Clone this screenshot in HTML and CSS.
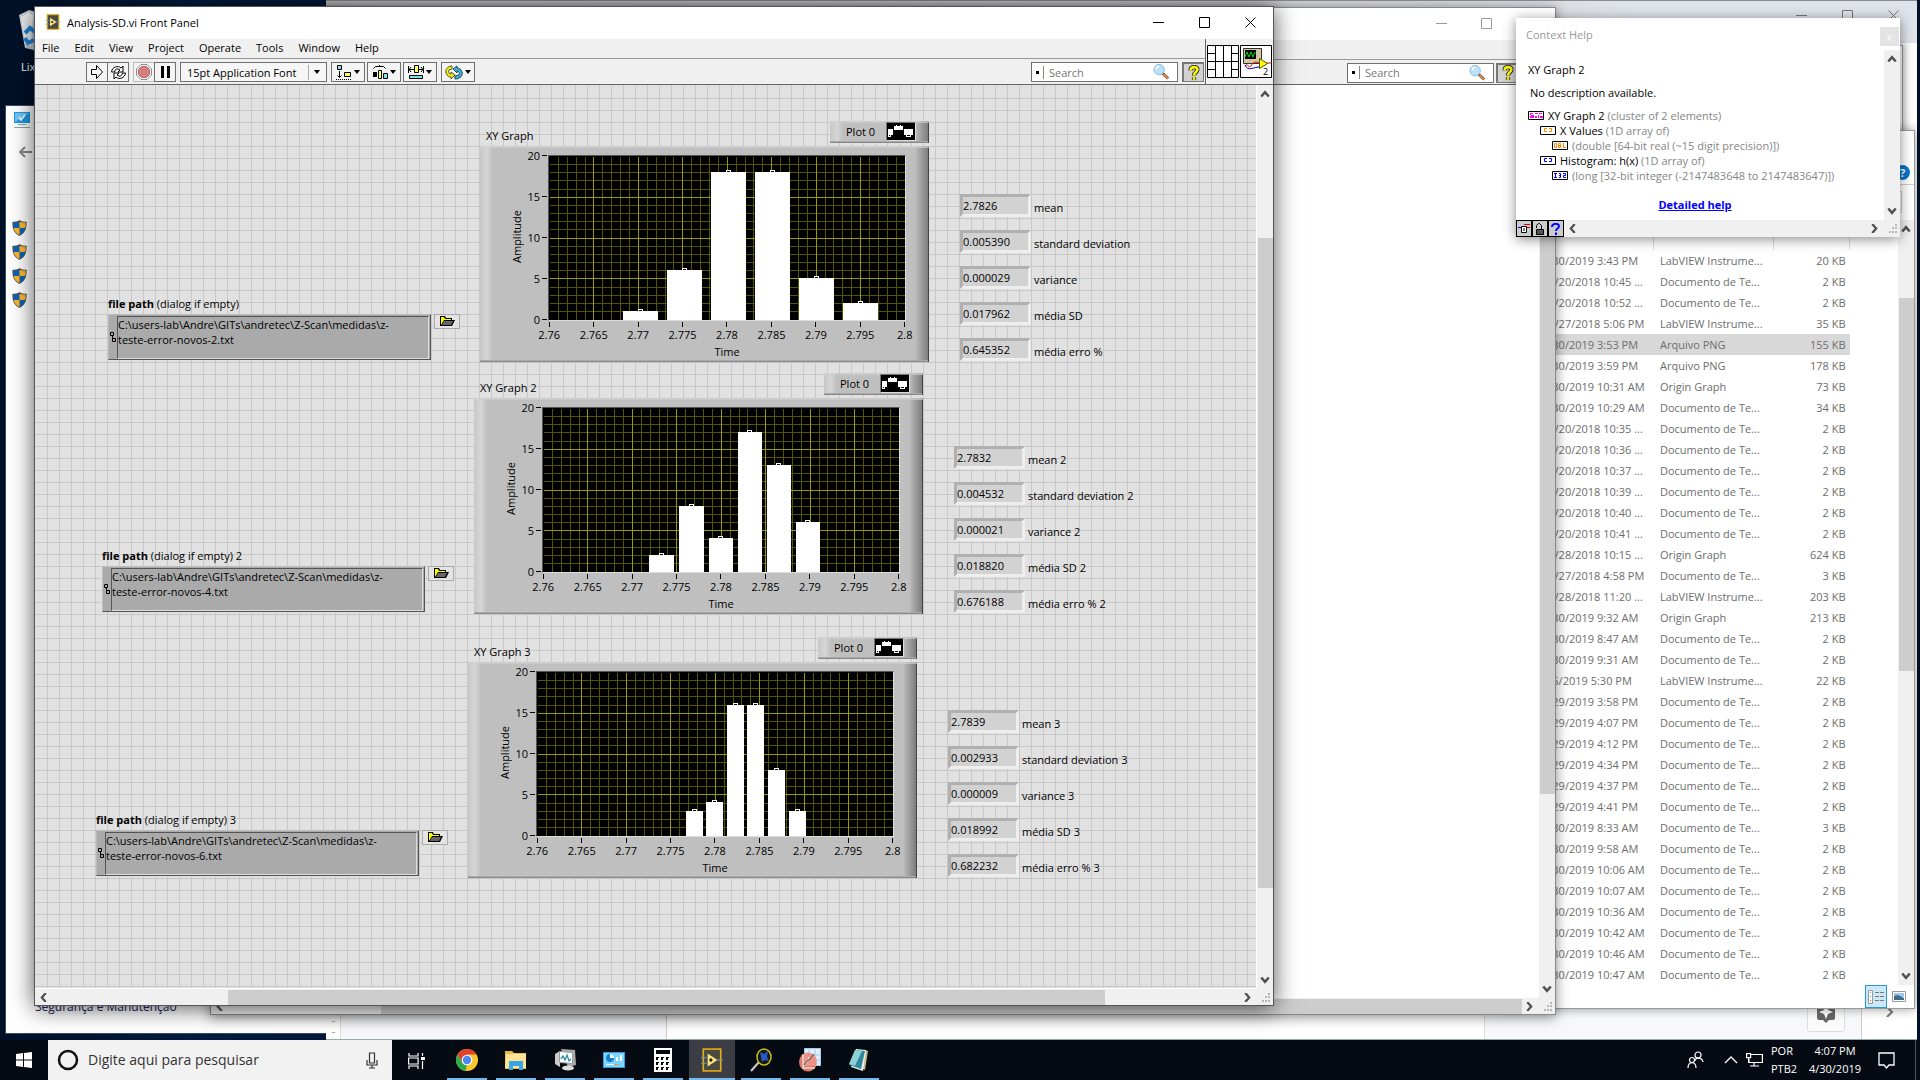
FILE: index.html
```html
<!DOCTYPE html>
<html lang="pt-BR">
<head>
<meta charset="utf-8">
<title>Analysis-SD.vi Front Panel</title>
<link rel="stylesheet" href="styles.css">
</head>
<body>
<svg class="defs" aria-hidden="true">
  <symbol id="plot-grid" viewBox="0 0 356 164">
    <rect width="356" height="164" fill="#000"/>
    <g transform="translate(.5 .5)" fill="none" shape-rendering="crispEdges">
      <path stroke="#555500" d="M9 0v164M18 0v164M27 0v164M36 0v164M53 0v164M62 0v164M71 0v164M80 0v164M98 0v164M107 0v164M116 0v164M124 0v164M142 0v164M151 0v164M160 0v164M169 0v164M187 0v164M196 0v164M204 0v164M213 0v164M231 0v164M240 0v164M249 0v164M258 0v164M276 0v164M284 0v164M293 0v164M302 0v164M320 0v164M329 0v164M338 0v164M347 0v164M0 8h356M0 16h356M0 24h356M0 33h356M0 49h356M0 57h356M0 65h356M0 73h356M0 90h356M0 98h356M0 106h356M0 114h356M0 131h356M0 139h356M0 147h356M0 155h356"/>
      <path stroke="#999900" d="M44 0v164M89 0v164M133 0v164M178 0v164M222 0v164M267 0v164M311 0v164M0 41h356M0 82h356M0 122h356"/>
    </g>
  </symbol>
  <symbol id="marker" viewBox="0 0 5 2"><path fill="#fff" d="M0 0h5v2h-5z"/><path d="M1 1h3v1h-3z"/></symbol>
  <symbol id="legend" viewBox="0 0 28 17">
    <rect width="28" height="17"/><path fill="#fff" d="M1 6h5v6h-2v2h-3zM7 3h2v-1h1v1h3v-1h1v1h2v4h-9zM17 6h9v6h-2v2h-5v-2h-2z"/><path d="M2 12h1v1h-1zM20 12h3v1h-3z"/>
  </symbol>
  <symbol id="folder-open" viewBox="0 0 15 11">
    <path d="M0 0h5l1 2h6v2h3l-3 6h-12z"/><path fill="#ff0" d="M1 1h3l1 2h6v1h-7l-3 5z"/><path fill="#666" d="M4 5h9l-2 4h-9z"/>
  </symbol>
  <symbol id="path-mark" viewBox="0 0 6 11"><path fill="none" stroke="#000" d="M.5.5h3v3h-3zM2.5 4v3M2.500 6.500h3v3h-3z"/></symbol>
  <symbol id="magnifier" viewBox="0 0 18 18">
    <path stroke="#555" stroke-width="3" d="M10 10l6 6"/><path stroke="#e8873a" stroke-width="2" d="M11 11l5 5"/><circle cx="6.500" cy="6.500" r="5.500" fill="#b9e2fa" stroke="#8eb2d8"/><path stroke="#fff" stroke-width="1.500" fill="none" d="M3.500 6a3 3 0 0 1 3-3"/>
  </symbol>
  <symbol id="help-mark" viewBox="0 0 14 18">
    <path fill="none" stroke="#222" stroke-width="5" d="M3 6c0-5 8-5 8-1 0 3-4 3-4 7M7 14v3"/><path fill="none" stroke="#ff0" stroke-width="3" d="M3 6c0-5 8-5 8-1 0 3-4 3-4 7M7 14v3"/>
  </symbol>
  <symbol id="shield" viewBox="0 0 16 18">
    <path fill="#555" d="M8 0c2 2 5 2 8 2 0 8-1 12-8 16-7-4-8-8-8-16 3 0 6 0 8-2z"/><path fill="#0b63ba" d="M8 2v7h-6.500c-.4-2-.4-4-.3-6 3 0 5 0 6.800-1zM8 9h6.500c-1 4-3 6-6.500 8z"/><path fill="#fcb92c" d="M8 2c2 1 4 1 6.800 1 .1 2 .1 4-.3 6h-6.500zM8 9v8c-3.500-2-5.500-4-6.500-8z"/>
  </symbol>
  <symbol id="up" viewBox="0 0 8 6"><path fill="none" stroke="#505050" stroke-width="2" d="M1 5l3-3.500 3 3.500"/></symbol>
  <symbol id="down" viewBox="0 0 8 6"><path fill="none" stroke="#505050" stroke-width="2" d="M1 1l3 3.500 3-3.500"/></symbol>
  <symbol id="left" viewBox="0 0 6 8"><path fill="none" stroke="#505050" stroke-width="2" d="M5 0l-3.500 4 3.500 4"/></symbol>
  <symbol id="right" viewBox="0 0 6 8"><path fill="none" stroke="#505050" stroke-width="2" d="M1 0l3.500 4-3.500 4"/></symbol>
  <symbol id="grip" viewBox="0 0 10 10"><path fill="#b8b8b8" d="M7 0h2v2h-2zM4 3h2v2h-2zM7 3h2v2h-2zM1 7h2v2h-2zM4 7h2v2h-2zM7 7h2v2h-2z"/></symbol>
  <symbol id="min" viewBox="0 0 11 11"><path stroke="currentColor" d="M0 5.500h11"/></symbol>
  <symbol id="max" viewBox="0 0 11 11"><path fill="none" stroke="currentColor" d="M.5.5h10v10h-10z"/></symbol>
  <symbol id="close" viewBox="0 0 11 11"><path stroke="currentColor" d="M.5.5l10 10M10.500.5l-10 10"/></symbol>
  <symbol id="labview" viewBox="0 0 20 22">
    <rect x="2" y="1" width="16" height="20" fill="#4a4a42" stroke="#e3ab14" stroke-width="1.500"/><path stroke="#5aa7d8" d="M0 9h5M0 14h5M15 11h5"/><path fill="#ffe27a" d="M6 5l9 6-9 6z"/><circle cx="9" cy="11" r="1.500" fill="#222"/>
  </symbol>
</svg>

<main class="desktop">
  <div class="bin">
    <svg width="24" height="42" viewBox="0 0 24 42"><path fill="#c9ced3" d="M0 5l10-5 14 4v38l-18-4z"/><path fill="#eef1f3" d="M2 7l8-5 4 4-2 30-6-2z"/><path fill="none" stroke="#1a86e0" stroke-width="4" d="M6 23l5-5 5 4M15 30l-6 3-3-5"/></svg>
    <span>Lixeira</span>
  </div>

  <section class="win control-panel" aria-label="Painel de Controle">
    <svg class="cp-icon" width="16" height="16" viewBox="0 0 16 16"><path fill="#1e9be8" d="M0 0h16v11H0z"/><path fill="#70c8f8" d="M1 1h14L1 10z"/><path fill="none" stroke="#fff" stroke-width="1.500" d="M5 5l2 3 4-5"/><path stroke="#8aa" d="M4 12.500h8M0 15.500h16"/></svg>
    <button class="plain back" aria-label="Voltar"><svg width="14" height="12" viewBox="0 0 14 12"><path fill="none" stroke="#888" stroke-width="2" d="M14 6H2M7 1L2 6l5 5"/></svg></button>
    <div class="shields">
      <svg><use href="#shield"/></svg><svg><use href="#shield"/></svg><svg><use href="#shield"/></svg><svg><use href="#shield"/></svg>
    </div>
    <a class="cp-link" href="#seguranca">Segurança e Manutenção</a>
  </section>

  <section class="win browser" aria-label="Navegador">
    <header class="browser-top"><svg><use href="#min"/></svg><svg><use href="#max"/></svg><svg><use href="#close"/></svg></header>
    <div class="browser-body">
      <div class="ruler"><i></i><i></i></div><div class="side"></div><div class="doc"></div>
      <div class="side right-side"><button class="explore" aria-label="Explorar"><svg width="18" height="22" viewBox="0 0 18 22"><path fill="#666" d="M2 0h14q2 0 2 2v14q0 2-2 2h-4l-3 3-3-3H2q-2 0-2-2V2q0-2 2-2z"/><path fill="#fff" d="M9 3l2 5 5 2-5 2-2 5-2-5-5-2 5-2z"/></svg></button></div>
      <div class="browser-tail"><svg width="8" height="10" viewBox="0 0 8 10"><path fill="none" stroke="#777" stroke-width="2" d="M1 0l5 5-5 5"/></svg></div>
    </div>
  </section>

  <section class="win behind" aria-hidden="true"></section>

  <section class="win explorer" aria-label="Explorador de Arquivos">
    <div class="ribbon"><span class="round-help">?</span></div>
    <div class="address"><div></div></div>
    <div class="ex-body">
      <table class="files">
        <thead><tr><th>Data de modificação</th><th>Tipo</th><th>Tamanho</th></tr></thead>
        <tbody>
          <tr><td>4/30/2019 3:43 PM</td><td>LabVIEW Instrume...</td><td>20 KB</td></tr>
          <tr><td>12/20/2018 10:45 ...</td><td>Documento de Te...</td><td>2 KB</td></tr>
          <tr><td>12/20/2018 10:52 ...</td><td>Documento de Te...</td><td>2 KB</td></tr>
          <tr><td>11/27/2018 5:06 PM</td><td>LabVIEW Instrume...</td><td>35 KB</td></tr>
          <tr class="selected"><td>4/30/2019 3:53 PM</td><td>Arquivo PNG</td><td>155 KB</td></tr>
          <tr><td>4/30/2019 3:59 PM</td><td>Arquivo PNG</td><td>178 KB</td></tr>
          <tr><td>4/30/2019 10:31 AM</td><td>Origin Graph</td><td>73 KB</td></tr>
          <tr><td>4/30/2019 10:29 AM</td><td>Documento de Te...</td><td>34 KB</td></tr>
          <tr><td>12/20/2018 10:35 ...</td><td>Documento de Te...</td><td>2 KB</td></tr>
          <tr><td>12/20/2018 10:36 ...</td><td>Documento de Te...</td><td>2 KB</td></tr>
          <tr><td>12/20/2018 10:37 ...</td><td>Documento de Te...</td><td>2 KB</td></tr>
          <tr><td>12/20/2018 10:39 ...</td><td>Documento de Te...</td><td>2 KB</td></tr>
          <tr><td>12/20/2018 10:40 ...</td><td>Documento de Te...</td><td>2 KB</td></tr>
          <tr><td>12/20/2018 10:41 ...</td><td>Documento de Te...</td><td>2 KB</td></tr>
          <tr><td>11/28/2018 10:15 ...</td><td>Origin Graph</td><td>624 KB</td></tr>
          <tr><td>11/27/2018 4:58 PM</td><td>Documento de Te...</td><td>3 KB</td></tr>
          <tr><td>11/28/2018 11:20 ...</td><td>LabVIEW Instrume...</td><td>203 KB</td></tr>
          <tr><td>4/30/2019 9:32 AM</td><td>Origin Graph</td><td>213 KB</td></tr>
          <tr><td>4/30/2019 8:47 AM</td><td>Documento de Te...</td><td>2 KB</td></tr>
          <tr><td>4/30/2019 9:31 AM</td><td>Documento de Te...</td><td>2 KB</td></tr>
          <tr><td>4/5/2019 5:30 PM</td><td>LabVIEW Instrume...</td><td>22 KB</td></tr>
          <tr><td>4/29/2019 3:58 PM</td><td>Documento de Te...</td><td>2 KB</td></tr>
          <tr><td>4/29/2019 4:07 PM</td><td>Documento de Te...</td><td>2 KB</td></tr>
          <tr><td>4/29/2019 4:12 PM</td><td>Documento de Te...</td><td>2 KB</td></tr>
          <tr><td>4/29/2019 4:34 PM</td><td>Documento de Te...</td><td>2 KB</td></tr>
          <tr><td>4/29/2019 4:37 PM</td><td>Documento de Te...</td><td>2 KB</td></tr>
          <tr><td>4/29/2019 4:41 PM</td><td>Documento de Te...</td><td>2 KB</td></tr>
          <tr><td>4/30/2019 8:33 AM</td><td>Documento de Te...</td><td>3 KB</td></tr>
          <tr><td>4/30/2019 9:58 AM</td><td>Documento de Te...</td><td>2 KB</td></tr>
          <tr><td>4/30/2019 10:06 AM</td><td>Documento de Te...</td><td>2 KB</td></tr>
          <tr><td>4/30/2019 10:07 AM</td><td>Documento de Te...</td><td>2 KB</td></tr>
          <tr><td>4/30/2019 10:36 AM</td><td>Documento de Te...</td><td>2 KB</td></tr>
          <tr><td>4/30/2019 10:42 AM</td><td>Documento de Te...</td><td>2 KB</td></tr>
          <tr><td>4/30/2019 10:46 AM</td><td>Documento de Te...</td><td>2 KB</td></tr>
          <tr><td>4/30/2019 10:47 AM</td><td>Documento de Te...</td><td>2 KB</td></tr>
        </tbody>
      </table>
      <div class="vscroll"><svg class="v"><use href="#up"/></svg><div class="track"><div class="thumb" style="margin-top:65px;height:373px"></div></div><svg class="v"><use href="#down"/></svg></div>
    </div>
    <footer class="ex-foot">
      <button class="view on" aria-label="Detalhes"><svg width="16" height="14" viewBox="0 0 16 14"><path fill="#fff" stroke="#999" d="M.5.5h4v13h-4z"/><path stroke="#777" d="M7 2.500h4M12 2.500h4M7 6.500h4M12 6.500h4M7 10.500h4M12 10.500h4"/><path fill="#69b" d="M2 2h1v1h-1zM2 6h1v1h-1z"/><path fill="#d44" d="M2 10h1v1h-1z"/></svg></button>
      <button class="view" aria-label="Miniaturas"><svg width="14" height="11" viewBox="0 0 14 11"><path fill="#fff" stroke="#999" d="M.5.5h13v10H.5z"/><path fill="#9cc8f4" d="M2 2h10v4H2z"/><path fill="#3f6d8a" d="M2 5l4-1 6 3v2H2z"/></svg></button>
    </footer>
  </section>

  <section class="win lv second" aria-label="LabVIEW">
    <header class="titlebar"><span></span>
      <div class="controls"><svg><use href="#min"/></svg><svg><use href="#max"/></svg><svg><use href="#close"/></svg></div>
    </header>
    <div class="menubar"></div>
    <div class="toolbar">
      <div class="search-box"><span class="search-arrow"></span><input type="text" placeholder="Search" aria-label="Search diagram"><svg><use href="#magnifier"/></svg></div>
      <button class="help-btn" aria-label="Help"><svg><use href="#help-mark"/></svg></button>
    </div>
    <div class="client">
      <div class="canvas blank"></div>
      <div class="vscroll"><svg class="v"><use href="#up"/></svg><div class="track"><div class="thumb" style="margin-top:62px;height:634px"></div></div><svg class="v"><use href="#down"/></svg></div>
    </div>
    <div class="hrow"><div class="hscroll"><svg class="h"><use href="#left"/></svg><div class="track"><div class="thumb" style="margin-left:152px;width:1141px"></div></div><svg class="h"><use href="#right"/></svg></div><svg class="grip"><use href="#grip"/></svg></div>
  </section>

  <section class="win lv front" aria-label="Analysis-SD.vi Front Panel">
    <header class="titlebar">
      <svg class="app" width="16" height="16"><use href="#labview"/></svg><span>Analysis-SD.vi Front Panel</span>
      <div class="controls">
        <button class="plain" aria-label="Minimize"><svg><use href="#min"/></svg></button><button class="plain" aria-label="Maximize"><svg><use href="#max"/></svg></button><button class="plain" aria-label="Close"><svg><use href="#close"/></svg></button>
      </div>
    </header>
    <div class="bars">
      <div class="bars-main">
        <nav class="menubar"><a href="#file">File</a><a href="#edit">Edit</a><a href="#view">View</a><a href="#project">Project</a><a href="#operate">Operate</a><a href="#tools">Tools</a><a href="#window">Window</a><a href="#help">Help</a></nav>
        <div class="toolbar">
          <div class="pair">
            <button class="tool sq" aria-label="Run"><svg width="12" height="14" viewBox="0 0 12 14"><path fill="#fff" stroke="#000" d="M.5 4.500h5v-4l6 6.500-6 6.500v-4h-5z"/></svg></button>
            <button class="tool sq" aria-label="Run continuously"><svg width="17" height="15" viewBox="0 0 17 15"><path fill="#fff" stroke="#000" d="M1.500 7C2 2 8 0 11 3l2-2v6H8l2-2C7 3 5 4 4.500 7zM15.500 8c-.5 5-6.500 7-9.500 4l-2 2V8h5l-2 2c3 2 5 1 5.500-2z"/></svg></button>
          </div>
          <div class="pair">
            <button class="tool sq dim" aria-label="Abort"><svg width="16" height="16" viewBox="0 0 16 16"><path fill="#fff" stroke="#888" d="M5 .5h6L15.500 5v6L11 15.500H5L.5 11V5z"/><path fill="#d08080" stroke="#b66" d="M5.500 2.500h5l3 3v5l-3 3h-5l-3-3v-5z"/></svg></button>
            <button class="tool sq" aria-label="Pause"><svg width="9" height="12" viewBox="0 0 9 12"><path d="M0 0h3v12H0zM6 0h3v12H6z"/></svg></button>
          </div>
          <div class="font-pick"><select aria-label="Font"><option>15pt Application Font</option></select><i class="caret"></i></div>
          <div class="trio">
            <button class="tool wide" aria-label="Align"><svg width="16" height="15" viewBox="0 0 16 15"><path fill="#7de3f4" stroke="#000" d="M1.500.5h4v4h-4z"/><path fill="#ff6" stroke="#000" d="M8.500 7.500h6v4h-6z"/><path stroke="#000" fill="none" d="M3.500 6v6M1.500 10.500l2 2 2-2"/><path stroke="#000" stroke-dasharray="1 1" d="M0 14.500h16"/></svg><i class="caret"></i></button>
            <button class="tool wide" aria-label="Distribute"><svg width="16" height="15" viewBox="0 0 16 15"><path fill="none" stroke="#000" d="M1.500 3.500l2-2h8l2 2M7.500 1V0"/><path d="M1 7h4v5H1z"/><path fill="#ff6" stroke="#000" d="M6.500 5.500h3v8h-3z"/><path fill="#7de3f4" stroke="#000" d="M11.500 8.500h4v5h-4z"/></svg><i class="caret"></i></button>
            <button class="tool wide" aria-label="Resize"><svg width="16" height="15" viewBox="0 0 16 15"><path fill="none" stroke="#000" d="M.5 1v7M15.500 1v7M1 4.500h14M3 2L1 4.500 3 7M13 2l2 2.500L13 7"/><path fill="#ff6" stroke="#000" d="M6.500.5h4v7h-4z"/><path fill="#7de3f4" stroke="#000" d="M1.500 10.500h13v3h-13z"/></svg><i class="caret"></i></button>
          </div>
          <button class="tool wide" aria-label="Reorder"><svg width="18" height="15" viewBox="0 0 18 15"><path fill="#ee0" stroke="#554" d="M7 1C2 1 0 5 1 8c1 3 3 4 5 4v2l4-4-4-3v2C4 9 3 7 4 5l3-1z"/><path fill="#3ab7d6" stroke="#245" d="M10 14c6 0 8-4 7-7-1-3-3-4-5-4V1L8 4l4 4V6c2 0 3 2 2 4l-4 1z"/></svg><i class="caret"></i></button>
          <div class="search-box"><span class="search-arrow"></span><input type="text" placeholder="Search" aria-label="Search"><svg><use href="#magnifier"/></svg></div>
          <button class="help-btn" aria-label="Help"><svg><use href="#help-mark"/></svg></button>
        </div>
      </div>
      <div class="vi-icons">
        <svg width="32" height="33" viewBox="0 0 32 33"><path fill="#fff" stroke="#000" d="M.5.5h31v32h-31zM8.500 0v33M16.500 0v33M24.500 0v33M0 8.500h8M24 8.500h8M0 16.500h32M0 24.500h8M24 24.500h8"/></svg>
        <svg width="32" height="33" viewBox="0 0 32 33"><path fill="#fff" stroke="#000" d="M.5.5h31v32H.5z"/><path fill="#d2c8a5" stroke="#333" d="M3.500 3.500h18v15h-18z"/><path d="M5 5h11v9H5z"/><path fill="none" stroke="#0d0" d="M5 12l2-5 2 5 2-5 2 5 2-5"/><path fill="none" stroke="#e00" d="M5 21c2-4 4 3 6 0s3-5 8-3M26 18h5"/><path fill="none" stroke="#00c" d="M5 20c3 7 9 2 14 2"/><path fill="#ff0" stroke="#550" d="M19.500 13.500l8 5-8 5z"/><text x="23" y="30" class="vi-num">2</text></svg>
      </div>
    </div>
    <div class="client">
      <div class="canvas">
        <div class="path p1">
          <label for="path1"><b>file path</b> (dialog if empty)</label>
          <div class="path-row"><div class="path-box"><svg><use href="#path-mark"/></svg><textarea id="path1" spellcheck="false">C:\users-lab\Andre\GITs\andretec\Z-Scan\medidas\z-
teste-error-novos-2.txt</textarea></div><button class="browse" aria-label="Browse"><svg><use href="#folder-open"/></svg></button></div>
        </div>
        <div class="path p2">
          <label for="path2"><b>file path</b> (dialog if empty) 2</label>
          <div class="path-row"><div class="path-box"><svg><use href="#path-mark"/></svg><textarea id="path2" spellcheck="false">C:\users-lab\Andre\GITs\andretec\Z-Scan\medidas\z-
teste-error-novos-4.txt</textarea></div><button class="browse" aria-label="Browse"><svg><use href="#folder-open"/></svg></button></div>
        </div>
        <div class="path p3">
          <label for="path3"><b>file path</b> (dialog if empty) 3</label>
          <div class="path-row"><div class="path-box"><svg><use href="#path-mark"/></svg><textarea id="path3" spellcheck="false">C:\users-lab\Andre\GITs\andretec\Z-Scan\medidas\z-
teste-error-novos-6.txt</textarea></div><button class="browse" aria-label="Browse"><svg><use href="#folder-open"/></svg></button></div>
        </div>

        <figure class="graph g1">
          <figcaption><span>XY Graph</span><div class="legend">Plot 0<svg><use href="#legend"/></svg></div></figcaption>
          <div class="frame">
            <span class="amp">Amplitude</span>
            <ul class="y-axis"><li>20</li><li>15</li><li>10</li><li>5</li><li>0</li></ul>
            <div class="plot-col">
              <svg class="plot" viewBox="0 0 356 164"><use href="#plot-grid"/><path fill="#fff" d="M74 155h35v9h-35zM118 114h35v50h-35zM162 16h35v148h-35zM206 16h35v148h-35zM250 122h35v42h-35zM294 147h35v17h-35z"/>
                <use href="#marker" width="5" height="2" x="89" y="153"/><use href="#marker" width="5" height="2" x="133" y="112"/><use href="#marker" width="5" height="2" x="177" y="14"/><use href="#marker" width="5" height="2" x="221" y="14"/><use href="#marker" width="5" height="2" x="265" y="120"/><use href="#marker" width="5" height="2" x="309" y="145"/></svg>
              <ul class="x-axis"><li>2.76</li><li>2.765</li><li>2.77</li><li>2.775</li><li>2.78</li><li>2.785</li><li>2.79</li><li>2.795</li><li>2.8</li></ul>
              <span class="time">Time</span>
            </div>
          </div>
        </figure>
        <figure class="graph g2">
          <figcaption><span>XY Graph 2</span><div class="legend">Plot 0<svg><use href="#legend"/></svg></div></figcaption>
          <div class="frame">
            <span class="amp">Amplitude</span>
            <ul class="y-axis"><li>20</li><li>15</li><li>10</li><li>5</li><li>0</li></ul>
            <div class="plot-col">
              <svg class="plot" viewBox="0 0 356 164"><use href="#plot-grid"/><path fill="#fff" d="M106 147h25v17h-25zM136 98h25v66h-25zM166 130h24v34h-24zM195 24h24v140h-24zM224 57h24v107h-24zM253 114h24v50h-24z"/>
                <use href="#marker" width="5" height="2" x="116" y="145"/><use href="#marker" width="5" height="2" x="146" y="96"/><use href="#marker" width="5" height="2" x="175" y="128"/><use href="#marker" width="5" height="2" x="204" y="22"/><use href="#marker" width="5" height="2" x="233" y="55"/><use href="#marker" width="5" height="2" x="262" y="112"/></svg>
              <ul class="x-axis"><li>2.76</li><li>2.765</li><li>2.77</li><li>2.775</li><li>2.78</li><li>2.785</li><li>2.79</li><li>2.795</li><li>2.8</li></ul>
              <span class="time">Time</span>
            </div>
          </div>
        </figure>
        <figure class="graph g3">
          <figcaption><span>XY Graph 3</span><div class="legend">Plot 0<svg><use href="#legend"/></svg></div></figcaption>
          <div class="frame">
            <span class="amp">Amplitude</span>
            <ul class="y-axis"><li>20</li><li>15</li><li>10</li><li>5</li><li>0</li></ul>
            <div class="plot-col">
              <svg class="plot" viewBox="0 0 356 164"><use href="#plot-grid"/><path fill="#fff" d="M149 139h17v25h-17zM169 130h17v34h-17zM190 33h17v131h-17zM210 33h17v131h-17zM231 98h17v66h-17zM252 139h17v25h-17z"/>
                <use href="#marker" width="5" height="2" x="155" y="137"/><use href="#marker" width="5" height="2" x="175" y="128"/><use href="#marker" width="5" height="2" x="196" y="31"/><use href="#marker" width="5" height="2" x="216" y="31"/><use href="#marker" width="5" height="2" x="237" y="96"/><use href="#marker" width="5" height="2" x="258" y="137"/></svg>
              <ul class="x-axis"><li>2.76</li><li>2.765</li><li>2.77</li><li>2.775</li><li>2.78</li><li>2.785</li><li>2.79</li><li>2.795</li><li>2.8</li></ul>
              <span class="time">Time</span>
            </div>
          </div>
        </figure>

        <div class="values v1">
          <div><input id="m1" value="2.7826" readonly><label for="m1">mean</label></div>
          <div><input id="s1" value="0.005390" readonly><label for="s1">standard deviation</label></div>
          <div><input id="a1" value="0.000029" readonly><label for="a1">variance</label></div>
          <div><input id="d1" value="0.017962" readonly><label for="d1">média SD</label></div>
          <div><input id="e1" value="0.645352" readonly><label for="e1">média erro %</label></div>
        </div>
        <div class="values v2">
          <div><input id="m2" value="2.7832" readonly><label for="m2">mean 2</label></div>
          <div><input id="s2" value="0.004532" readonly><label for="s2">standard deviation 2</label></div>
          <div><input id="a2" value="0.000021" readonly><label for="a2">variance 2</label></div>
          <div><input id="d2" value="0.018820" readonly><label for="d2">média SD 2</label></div>
          <div><input id="e2" value="0.676188" readonly><label for="e2">média erro % 2</label></div>
        </div>
        <div class="values v3">
          <div><input id="m3" value="2.7839" readonly><label for="m3">mean 3</label></div>
          <div><input id="s3" value="0.002933" readonly><label for="s3">standard deviation 3</label></div>
          <div><input id="a3" value="0.000009" readonly><label for="a3">variance 3</label></div>
          <div><input id="d3" value="0.018992" readonly><label for="d3">média SD 3</label></div>
          <div><input id="e3" value="0.682232" readonly><label for="e3">média erro % 3</label></div>
        </div>
      </div>
      <div class="vscroll"><svg class="v"><use href="#up"/></svg><div class="track"><div class="thumb" style="margin-top:140px;height:650px"></div></div><svg class="v"><use href="#down"/></svg></div>
    </div>
    <div class="hrow"><div class="hscroll"><svg class="h"><use href="#left"/></svg><div class="track"><div class="thumb" style="margin-left:175px;width:877px"></div></div><svg class="h"><use href="#right"/></svg></div><svg class="grip"><use href="#grip"/></svg></div>
  </section>

  <section class="win context" aria-label="Context Help">
    <header><span>Context Help</span><button class="help-close" aria-label="Close">x</button></header>
    <div class="ctx-body">
      <div class="ctx-text">
        <h2>XY Graph 2</h2>
        <p>No description available.</p>
        <ul>
          <li><svg viewBox="0 0 16 9"><path fill="#fff" stroke="#000" d="M.5.5h15v8H.5z"/><path fill="#f0f" d="M2 2h3v1H3v1h3v3H2V5h1V4H2zM7 2h3v1H7zM11 2h3v1h-3zM7 5h2v2H7zM10 4h1v3h-1zM12 5h3v2h-3z"/></svg>XY Graph 2 <em>(cluster of 2 elements)</em></li>
          <li class="in1"><svg viewBox="0 0 16 9"><path fill="#fff" stroke="#000" d="M.5.5h15v8H.5z"/><path fill="none" stroke="#f80" d="M7 2.500H4.500v3H7M9 2.500h2.500v3H9"/></svg>X Values <em>(1D array of)</em></li>
          <li class="in2"><svg viewBox="0 0 16 9"><path fill="#fff" stroke="#000" d="M.5.5h15v8H.5z"/><path fill="none" stroke="#f80" d="M2.500 2.500h2v4h-2zM6.500 2.500h2v4h-2zM7 4.500h2M11.500 2v4.500H14"/></svg><em>(double [64-bit real (~15 digit precision)])</em></li>
          <li class="in1"><svg viewBox="0 0 16 9"><path fill="#fff" stroke="#000" d="M.5.5h15v8H.5z"/><path fill="none" stroke="#00f" d="M7 2.500H4.500v3H7M9 2.500h2.500v3H9"/></svg>Histogram: h(x) <em>(1D array of)</em></li>
          <li class="in2"><svg viewBox="0 0 16 9"><path fill="#fff" stroke="#000" d="M.5.5h15v8H.5z"/><path fill="none" stroke="#00f" d="M2 2.500h3M3.500 2v4M2 6.500h3M7 2.500h1.500v4H7M7 4.500h2M11 2.500h2.500v2h-2v2H14"/></svg><em>(long [32-bit integer (-2147483648 to 2147483647)])</em></li>
        </ul>
        <a href="#detailed">Detailed help</a>
      </div>
      <div class="vscroll"><svg class="v"><use href="#up"/></svg><div class="track"></div><svg class="v"><use href="#down"/></svg></div>
    </div>
    <div class="ctx-foot">
      <button aria-label="Show terminals"><svg width="12" height="12" viewBox="0 0 12 12"><path fill="none" stroke="#c00" d="M6 1.500h6M8 4.500h4"/><path stroke="#00f" d="M0 4.500h3"/><path fill="#fff" stroke="#000" d="M3.500 3.500h5v6h-5zM6 5v3"/></svg></button>
      <button aria-label="Lock"><svg width="12" height="12" viewBox="0 0 12 12"><path fill="#555" stroke="#000" d="M2.500 6.500h7v5h-7z"/><path fill="none" stroke="#000" d="M2.500 5V2.500l2-2h1l2 2v4"/></svg></button>
      <button aria-label="More help"><svg width="10" height="12" viewBox="0 0 10 12"><path fill="none" stroke="#00f" stroke-width="2" d="M1 4c0-4 7-4 7-1s-3 2-3 5M5 9.500V12"/></svg></button>
      <div class="hscroll"><svg class="h"><use href="#left"/></svg><div class="track"></div><svg class="h"><use href="#right"/></svg></div><svg class="grip"><use href="#grip"/></svg>
    </div>
  </section>
</main>

<footer class="taskbar">
  <button class="start" aria-label="Iniciar"><svg width="16" height="16" viewBox="0 0 16 16"><path fill="#fff" d="M0 2l7-1v6.500H0zM8 1l8-1v7.500H8zM0 8.500h7V15l-7-1zM8 8.500h8V16l-8-1z"/></svg></button>
  <div class="task-search">
    <svg width="22" height="22" viewBox="0 0 22 22"><circle cx="11" cy="11" r="9" fill="none" stroke="#111" stroke-width="2.500"/></svg>
    <input type="text" placeholder="Digite aqui para pesquisar" aria-label="Pesquisar">
    <svg width="12" height="17" viewBox="0 0 12 17"><path fill="none" stroke="#333" stroke-width="1.200" d="M3.500 1h5v10h-5zM1 8v5h10V8M6 13v3M3 16h6"/></svg>
  </div>
  <div class="apps">
    <button aria-label="Visão de tarefas"><svg width="17" height="16" viewBox="0 0 17 16"><path fill="none" stroke="#fff" stroke-width="1.200" d="M1 0v3h9V0M1 16v-3h9v3M.6 5h9.500v6H.6zM14.500 0v3M14.500 8v8"/><path fill="#fff" d="M13 4h4v3h-4z"/></svg></button>
    <button class="run first" aria-label="Chrome"><svg width="22" height="22" viewBox="0 0 22 22"><circle cx="11" cy="11" r="11" fill="#fbc72c"/><path fill="#e2402f" d="M1.500 5.500A11 11 0 0 1 20.500 5.500H11L6.200 13.700z"/><path fill="#2da94f" d="M1.500 5.500L6.200 13.800 11 16.500 9.500 22A11 11 0 0 1 1.500 5.500z"/><circle cx="11" cy="11" r="5.300" fill="#fff"/><circle cx="11" cy="11" r="4.200" fill="#4a87f0"/></svg></button>
    <button class="run" aria-label="Explorador"><svg width="22" height="20" viewBox="0 0 22 20"><path fill="#e9b94b" d="M0 1h7l2 2h12v16H0z"/><path fill="#ffe394" d="M1 4h20v14H0z"/><path fill="#37a6e8" d="M4 20v-9h14v9h-4v-4H8v4z"/></svg></button>
    <button class="run" aria-label="Monitor"><svg width="23" height="22" viewBox="0 0 23 22"><path fill="#aaa" d="M7 0l14 1 1 15-8 2z"/><path fill="#ccc" d="M1 5l5-3v16l-5-3z"/><path fill="#fff" stroke="#999" d="M5.500 2.500l13 1v11l-13-1z"/><path fill="none" stroke="#28a" stroke-width="1.200" d="M7 10l2-3 2 4 2-5 2 6 2-2"/><ellipse cx="14" cy="19" rx="6" ry="2.500" fill="#ddd"/></svg></button>
    <button class="run" aria-label="Painel de Controle"><svg width="22" height="16" viewBox="0 0 22 16"><path fill="#2b9de0" d="M0 0h22v16H0z"/><path fill="#7ed4ff" d="M1 1h20v14H1z"/><circle cx="7" cy="6" r="4" fill="#1680c8"/><path fill="#fff" d="M7 2v4h4a4 4 0 0 0-4-4zM13 5h2v4h-2zM17 3h2v6h-2zM3 12h8v1H3z"/><path fill="#f90" d="M11 12h5v1h-5z"/></svg></button>
    <button class="run" aria-label="Calculadora"><svg width="18" height="24" viewBox="0 0 18 24"><path fill="#fff" d="M0 0h18v24H0z"/><path fill="#05080e" d="M2 2h14v4H2zM2 9h3v1H4v2H2zM7 9h3v1H9v2H7zM12 9h3v1h-1v2h-2zM2 14h3v1H4v2H2zM7 14h3v1H9v2H7zM12 14h3v1h-1v2h-2zM2 19h3v1H4v2H2zM7 19h3v1H9v2H7zM12 19h3v1h-1v2h-2z"/></svg></button>
    <button class="run active" aria-label="LabVIEW"><svg width="24" height="24"><use href="#labview"/></svg></button>
    <button class="run" aria-label="MAX"><svg width="22" height="24" viewBox="0 0 22 24"><path stroke="#ccc" stroke-width="2" d="M9 14L1 23"/><ellipse cx="14" cy="9" rx="7" ry="8" fill="#111a10" stroke="#cdbb18" stroke-width="1.500"/><path fill="#2a57c9" d="M10 4l4 2 4-3-1 6 2 4-4-1-3 2-1-5z"/></svg></button>
    <button class="run" aria-label="Origin"><svg width="24" height="24" viewBox="0 0 24 24"><path fill="#dfefff" stroke="#a5cdec" d="M6.500.5h16v17h-16zM11 1v17M17 1v17M6 7h17M6 12h17"/><ellipse cx="10" cy="14" rx="9" ry="9.500" fill="#f08878" fill-opacity=".9"/><path fill="none" stroke="#fff" d="M5 6v14h12M5 18c3-2 5-5 6-9"/><path fill="none" stroke="#345" d="M6 17l3-4 3-2 4-5"/></svg></button>
    <button class="run" aria-label="Bloco"><svg width="24" height="24" viewBox="0 0 24 24"><path fill="#c9b98a" d="M18 2l3 1-3 19-4-2z"/><path fill="#e9f4f4" d="M9 1l10 1-3 21-12-4z"/><path fill="#2f8798" d="M8 2l10 1-4 18-12-4z"/><path fill="#8dd0d8" d="M8 2l7 1-7 15-6-2z"/></svg></button>
  </div>
  <div class="tray">
    <svg class="people" width="18" height="18" viewBox="0 0 18 18"><g fill="none" stroke="#fff" stroke-width="1.200"><circle cx="12" cy="4" r="3"/><circle cx="6" cy="9" r="2.500"/><path d="M9 10c0-4 7-4 8 1M2 17c0-7 8-7 8 0"/></g></svg>
    <svg class="chev" width="14" height="8" viewBox="0 0 14 8"><path fill="none" stroke="#fff" stroke-width="1.300" d="M1 7l6-6 6 6"/></svg>
    <svg class="net" width="17" height="14" viewBox="0 0 17 14"><path fill="none" stroke="#fff" stroke-width="1.200" d="M5 1.500h11.400v8H3V6M8 10v3M4 13h9M.6.6h4v4h-4zM2.600 5v5"/></svg>
    <div class="two lang">POR<br>PTB2</div>
    <div class="two clock">4:07 PM<br>4/30/2019</div>
    <svg class="note" width="17" height="17" viewBox="0 0 17 17"><path fill="none" stroke="#fff" stroke-width="1.300" d="M1 1h15v12h-5l-2.500 3L6 13H1z"/></svg>
  </div>
</footer>
</body>
</html>
```
FILE: styles.css
```css
* { box-sizing: border-box; }
body {
  margin: 0;
  height: 100vh;
  display: flex;
  flex-direction: column;
  overflow: hidden;
  background: #00112e;
  color: #000;
  font: 11px/15px "Open Sans", "Noto Sans", sans-serif;
}
ul { list-style: none; margin: 0; padding: 0; }
button, input, select, textarea { font: inherit; color: inherit; border-radius: 0; margin: 0; }
button { padding: 0; border: 0; display: flex; align-items: center; justify-content: center; }
svg { flex: none; display: block; }
a { color: inherit; text-decoration: none; }
.defs { position: absolute; width: 0; height: 0; }
.plain { background: none; }
.desktop {
  flex: 1;
  position: relative;
  overflow: hidden;
  background: linear-gradient(90deg, #001026, #001c40 200px, #001026 700px);
}
.win { position: absolute; background: #fff; display: flex; flex-direction: column; }

/* desktop icon */
.bin { position: absolute; left: 19px; top: 10px; color: #fff; display: grid; gap: 7px; }
.bin span { padding-left: 2px; }

/* control panel */
.control-panel { left: 5px; top: 105px; width: 420px; bottom: 6px; border: 1px solid #3a4a60; padding: 6px; }
.cp-icon { margin-left: 2px; }
.back { margin: 18px 0 0 6px; width: 14px; height: 12px; }
.shields { display: grid; gap: 8px; margin: 62px 0 0; }
.shields svg { width: 15px; height: 16px; }
.cp-link { margin: auto 0 13px 23px; color: #1c2260; font-size: 12px; }

/* browser */
.browser { left: 326px; right: 3px; top: 0; bottom: 0; background: #fff; border-top: 1px solid #8c8c90; border-bottom: 1px solid #9aa; }
.browser-top { height: 42px; background: linear-gradient(90deg, #c6c7cb, #d4d6da 70%, #dfe4ea 82%); display: flex; justify-content: flex-end; gap: 35px; padding: 9px 18px 0; color: #777; }
.browser-top svg { width: 11px; height: 11px; }
.browser-body { flex: 1; display: flex; }
.ruler { width: 15px; border-right: 1px solid #ddd; display: flex; flex-direction: column; justify-content: flex-end; align-items: center; gap: 10px; padding-bottom: 6px; }
.ruler i { width: 3px; height: 1px; background: #aaa; }
.side { width: 326px; background: #f7f8fa; border-right: 1px solid #ccc; }
.doc { flex: 1; }
.right-side { width: 378px; border-left: 1px solid #ddd; display: flex; justify-content: flex-end; align-items: flex-end; padding: 0 16px 7px 0; }
.explore { width: 38px; height: 38px; border: 1px solid #ddd; border-radius: 3px; background: #fafafa; }
.browser-tail { width: 55px; display: flex; align-items: flex-end; justify-content: center; padding-bottom: 22px; }
.behind { left: 1600px; top: 45px; right: 17px; height: 500px; border: 1px solid #999; box-shadow: 0 0 8px #0005; }

/* file explorer */
.explorer { left: 1500px; right: 5px; top: 130px; bottom: 31px; border: 1px solid #999; box-shadow: 0 0 10px #0006; color: #6d6d6d; }
.ribbon { height: 54px; border-bottom: 1px solid #ccc; display: flex; justify-content: flex-end; align-items: flex-end; padding: 4px; }
.round-help { width: 15px; height: 15px; border-radius: 50%; background: #0c75c8; color: #fff; font-weight: 700; text-align: center; }
.address { height: 35px; padding: 6px 12px 6px 380px; }
.address div { height: 22px; border: 1px solid #ccc; }
.ex-body { flex: 1; display: flex; justify-content: space-between; min-height: 0; }
.files { border-collapse: collapse; table-layout: fixed; width: 310px; height: 0; margin-left: 39px; }
.files th { height: 30px; padding: 0 8px 11px 2px; border-right: 1px solid #ddd; font-weight: 400; text-align: left; color: #44506e; white-space: nowrap; }
.files th:nth-child(1) { width: 113px; }
.files th:nth-child(2) { width: 120px; padding-left: 7px; }
.files td { height: 21px; padding: 0 2px; white-space: nowrap; }
.files td:nth-child(2) { padding-left: 7px; }
.files td:nth-child(3) { text-align: right; padding-right: 4px; }
.selected { background: #d8d8d8; }
.ex-foot { height: 23px; display: flex; justify-content: flex-end; padding-right: 4px; }
.view { width: 22px; background: none; }
.view + .view { margin-left: 1px; }
.view.on { border: 1px solid #269ad6; background: #cce8f7; }

/* scroll bars */
.vscroll { width: 16px; background: #f0f0f0; display: flex; flex-direction: column; align-items: center; padding: 5px 0; }
.vscroll .track { flex: 1; width: 15px; min-height: 0; }
.hscroll { flex: 1; height: 16px; background: #f0f0f0; display: flex; align-items: center; padding: 0 5px; gap: 6px; min-width: 0; }
.hscroll .track { flex: 1; min-width: 0; }
.hscroll .thumb { height: 15px; max-width: 100%; }
.thumb { background: #cdcdcd; }
svg.v { width: 10px; height: 8px; }
svg.h { width: 7px; height: 9px; }
.grip { width: 10px; height: 10px; margin: 4px 2px 0 5px; }

/* LabVIEW windows */
.lv { border: 1px solid #555; background: #f0f0f0; }
.second { left: 210px; width: 1346px; top: 7px; bottom: 25px; border-color: #888; box-shadow: 0 2px 12px #0007; }
.front { left: 34px; width: 1240px; top: 6px; bottom: 34px; box-shadow: 0 2px 22px #000a; }
.titlebar { height: 32px; background: #fff; display: flex; align-items: center; padding: 0 0 2px 10px; gap: 6px; }
.titlebar .app { width: 16px; height: 16px; }
.controls { margin-left: auto; display: flex; }
.controls button { width: 46px; height: 30px; }
.controls svg { width: 11px; height: 11px; }
.second .controls { gap: 34px; padding-right: 18px; color: #999; }
.bars { display: flex; border-bottom: 1px solid #666; }
.bars-main { flex: 1; }
.menubar { height: 20px; display: flex; align-items: center; gap: 15px; padding: 0 0 2px 7px; border-bottom: 1px solid #999; }
.toolbar { height: 25px; display: flex; align-items: center; padding: 1px 2px 0 51px; gap: 4px; }
.front .toolbar { padding-right: 1px; }
.second .toolbar { border-bottom: 1px solid #666; padding-right: 37px; justify-content: flex-end; }
.pair, .trio { display: flex; }
.pair .tool + .tool { margin-left: -1px; }
.trio { gap: 2px; }
.tool { height: 20px; border: 1px solid #707070; background: #f4f4f4; gap: 2px; }
.sq { width: 22px; }
.dim { border-color: #bbb; }
.wide { width: 34px; }
.caret { border: 3px solid transparent; border-top: 4px solid #000; border-bottom: 0; }
.font-pick { width: 147px; height: 20px; display: flex; align-items: center; border: 1px solid #707070; background: #f6f6f6; padding-right: 6px; }
.font-pick select { appearance: none; flex: 1; border: 0; border-right: 1px solid #aaa; margin-right: 5px; background: none; padding: 0 0 0 6px; }
.search-box { margin-left: auto; width: 147px; height: 20px; background: #fff; border: 1px solid #707070; display: flex; align-items: center; padding: 0 7px 0 4px; }
.search-arrow { width: 8px; height: 13px; border-right: 1px solid #888; background: linear-gradient(#000, #000) 0 5px / 3px 3px no-repeat; }
.search-box input { flex: 1; min-width: 0; border: 0; background: none; padding: 0 0 0 5px; }
.search-box input::placeholder { color: #777; opacity: 1; }
.search-box svg { width: 17px; height: 18px; }
.help-btn { width: 22px; height: 20px; border: 2px solid #777; border-width: 2px 1px 1px 2px; background: #d2d2d2; }
.second .help-btn { margin-left: -2px; }
.help-btn svg { width: 12px; height: 16px; }
.vi-icons { width: 68px; border-left: 1px solid #666; display: flex; gap: 1px; padding: 6px 1px 0; }
.vi-num { font-size: 9px; }
.client { flex: 1; display: flex; min-height: 0; }
.canvas {
  flex: 1;
  position: relative;
  overflow: hidden;
  border-right: 1px solid #fff;
  border-bottom: 1px solid #fff;
  background: repeating-linear-gradient(90deg, transparent 0 11px, #c8c8c8 11px 12px) 1px 0, repeating-linear-gradient(transparent 0 11px, #c8c8c8 11px 12px) 0 2px, #e1e1e1;
}
.canvas.blank { background: #fff; }
.hrow { height: 16px; display: flex; background: #f0f0f0; }

/* file path controls */
.path { position: absolute; display: grid; gap: 3px; }
.p1 { left: 73px; top: 211px; }
.p2 { left: 67px; top: 463px; }
.p3 { left: 61px; top: 727px; }
.path-row { display: flex; align-items: flex-start; gap: 3px; }
.path-box { width: 323px; height: 46px; background: #aaa; border: 1px solid #bbb; border-right-color: #555; border-bottom-color: #555; display: flex; align-items: center; gap: 1px; padding: 1px; }
.path-box svg { width: 6px; height: 11px; }
.path-box textarea { flex: 1; height: 43px; resize: none; overflow: hidden; white-space: pre; background: #aaa; border: 1px solid #555; border-right-color: #ddd; border-bottom-color: #ddd; padding: 0; outline: 0; }
.browse { width: 26px; height: 15px; background: #e4e4e4; border: 1px solid #aaa; }
.browse svg { width: 15px; height: 11px; }

/* graphs */
.graph { position: absolute; margin: 0; width: 449px; }
.g1 { left: 445px; top: 36px; }
.g2 { left: 439px; top: 288px; }
.g3 { left: 433px; top: 552px; }
figcaption { height: 25px; display: flex; justify-content: space-between; align-items: flex-start; }
figcaption > span { padding: 7px 0 0 6px; }
.legend { width: 99px; height: 22px; display: flex; align-items: center; gap: 11px; padding: 0 0 2px 16px; }
.legend svg { width: 30px; height: 19px; border: 1px solid #777; border-right-color: #ddd; border-bottom-color: #ddd; }
.legend, .frame {
  background: linear-gradient(90deg, #c8c8c8, #d6d6d6 7px, #bfbfbf 13px, #bfbfbf calc(100% - 14px), #777 100%);
  box-shadow: inset 0 2px #d0d0d0aa, inset -1px 0 #444, inset 0 -1px #888, inset 0 -2px #aaa;
}
.frame { height: 216px; display: flex; }
.amp { width: 44px; height: 182px; padding-right: 30px; display: flex; justify-content: center; writing-mode: vertical-rl; transform: rotate(180deg); line-height: 14px; }
.y-axis { width: 24px; margin-top: -11px; }
.y-axis li { height: 41px; display: flex; align-items: center; justify-content: flex-end; gap: 2px; padding-right: 1px; }
.y-axis li::after { content: ""; width: 5px; height: 1px; background: #000; }
.plot-col { width: 358px; padding-top: 9px; display: flex; flex-direction: column; align-items: center; }
.plot { width: 358px; height: 166px; border: 1px solid #555; border-right-color: #ddd; border-bottom-color: #ddd; flex: none; }
.x-axis { width: 400px; display: grid; grid-template-columns: repeat(9, 1fr); padding-top: 1px; }
.x-axis li { display: flex; flex-direction: column; align-items: center; }
.x-axis li::before { content: ""; width: 1px; height: 5px; background: #000; }
.time { margin-top: 2px; }

/* numeric indicators */
.values { position: absolute; display: grid; gap: 13px; }
.v1 { left: 925px; top: 109px; }
.v2 { left: 919px; top: 361px; }
.v3 { left: 913px; top: 625px; }
.values div { height: 23px; display: flex; align-items: center; gap: 3px; }
.values input { width: 71px; height: 23px; border: 3px solid; border-color: #b0b0b0 #eee #eee #b0b0b0; background: #d2d2d2; padding: 0 0 1px; outline: 0; }
.values label { padding-top: 3px; }

/* context help */
.context { right: 20px; top: 18px; width: 384px; height: 219px; box-shadow: 0 2px 12px #0007; }
.context header { height: 32px; display: flex; justify-content: space-between; padding: 9px 1px 0 10px; color: #999; }
.help-close { width: 19px; height: 19px; background: #e3e3e3; color: #fff; }
.ctx-body { flex: 1; display: flex; min-height: 0; }
.ctx-text { flex: 1; padding: 12px 22px 0 12px; }
.ctx-text h2 { font-size: 11px; font-weight: 400; margin: 0; }
.ctx-text p { margin: 8px 0 8px 2px; }
.ctx-text li { display: flex; align-items: center; white-space: pre; }
.ctx-text li svg { width: 16px; height: 9px; margin-right: 4px; }
.ctx-text em { font-style: normal; color: #868686; }
.in1 { padding-left: 12px; }
.in2 { padding-left: 24px; }
.ctx-text > a { display: block; margin-top: 14px; text-align: center; color: #00f; font-weight: 700; text-decoration: underline; }
.ctx-foot { height: 17px; display: flex; background: #f0f0f0; }
.ctx-foot button { width: 16px; border: 1px solid #000; background: #ccc; }

/* taskbar */
.taskbar { height: 40px; background: #060b13; color: #fff; display: flex; }
.start { width: 48px; background: none; }
.task-search { width: 344px; background: #f2f2f2; display: flex; align-items: center; padding: 0 14px 0 9px; }
.task-search input { flex: 1; border: 0; background: none; font-size: 14px; line-height: 20px; padding: 0 0 0 9px; color: #333; }
.task-search input::placeholder { color: #333; opacity: 1; }
.apps { display: flex; gap: 3px; padding-left: 1px; }
.apps button { width: 46px; background: none; padding-top: 2px; }
.apps .run { padding: 0; background: linear-gradient(#76b9ed, #76b9ed) 50% 100% / 40px 2px no-repeat; }
.apps .first { margin-left: 2px; }
.apps .run.active { background: linear-gradient(#76b9ed, #76b9ed) 0 100% / 100% 2px no-repeat, #3a3e44; }
.tray { margin-left: auto; margin-right: 4px; padding-right: 20px; display: flex; align-items: center; border-right: 1px solid #555; }
.people { margin-right: 20px; }
.chev { margin-right: 8px; }
.net { margin-right: 8px; }
.two { line-height: 18px; text-align: center; white-space: nowrap; }
.lang { width: 28px; text-align: left; margin-right: 9px; }
.clock { width: 54px; margin-right: 16px; }
```
